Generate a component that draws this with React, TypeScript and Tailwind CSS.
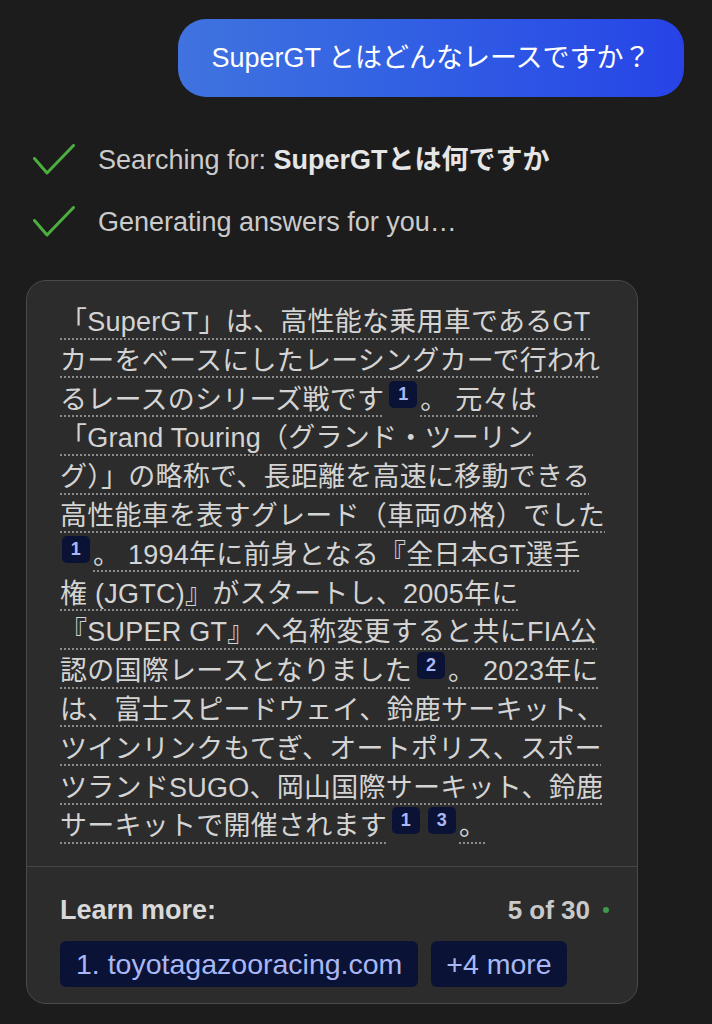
type Seg = string | number;

const LINES: Seg[][] = [
  ["「SuperGT」は、高性能な乗用車であるGT"],
  ["カーをベースにしたレーシングカーで行われ"],
  ["るレースのシリーズ戦です", 1, "。 元々は"],
  ["「Grand Touring（グランド・ツーリン"],
  ["グ）」の略称で、長距離を高速に移動できる"],
  ["高性能車を表すグレード（車両の格）でした"],
  [1, "。 1994年に前身となる『全日本GT選手"],
  ["権 (JGTC)』がスタートし、2005年に"],
  ["『SUPER GT』へ名称変更すると共にFIA公"],
  ["認の国際レースとなりました", 2, "。 2023年に"],
  ["は、富士スピードウェイ、鈴鹿サーキット、"],
  ["ツインリンクもてぎ、オートポリス、スポー"],
  ["ツランドSUGO、岡山国際サーキット、鈴鹿"],
  ["サーキットで開催されます", 1, 3, "。"],
];

const FONT = "font-['Liberation_Sans','Noto_Sans_CJK_JP',sans-serif]";

function Check() {
  return (
    <svg width="42" height="32" viewBox="0 0 42 32" fill="none" className="shrink-0">
      <path d="M1.5 14.5 L14 29 L40.5 1.5" stroke="#4cae3e" strokeWidth="3" strokeLinecap="round" strokeLinejoin="round" />
    </svg>
  );
}

function Cite({ n, first }: { n: number; first: boolean }) {
  return (
    <span
      className={`inline-block h-[27px] w-[28px] rounded-[5px] bg-[#0a1235] text-center align-top text-[18px] font-bold leading-[27px] text-[#a9b8f5] ${
        first ? "ml-[2px] mr-[3px]" : "ml-[5px] mr-[3px]"
      }`}
    >
      {n}
    </span>
  );
}

function AnswerLine({ segs }: { segs: Seg[] }) {
  return (
    <div className="whitespace-nowrap leading-[38.8px] tracking-[0.25px]">
      {segs.map((s, i) =>
        typeof s === "number" ? (
          <Cite key={i} n={s} first={i === 0} />
        ) : (
          <span
            key={i}
            className="underline decoration-[#8c8c8c] decoration-dotted decoration-2 underline-offset-[7px]"
          >
            {s}
          </span>
        )
      )}
    </div>
  );
}

export default function App() {
  return (
    <div className={`min-h-[1024px] w-[712px] bg-[#1c1c1c] pt-[19px] ${FONT}`}>
      <div className="flex justify-end pr-[28px]">
        <div className="flex h-[78px] w-[506px] items-center justify-center rounded-[28px] bg-linear-to-r from-[#4073df] to-[#2743e7] text-[27px] text-white">
          SuperGT とはどんなレースですか？
        </div>
      </div>

      <div className="mt-[43px] flex flex-col gap-[22px] pl-[33px]">
        <div className="flex h-[40px] items-center gap-[23px] text-[27px] text-[#cbcbcb]">
          <Check />
          <span>
            Searching for: <span className="font-bold text-[#e6e6e6]">SuperGTとは何ですか</span>
          </span>
        </div>
        <div className="flex h-[40px] items-center gap-[23px] text-[27px] text-[#cbcbcb]">
          <Check />
          <span>Generating answers for you…</span>
        </div>
      </div>

      <section className="ml-[26px] mt-[38px] w-[612px] rounded-[20px] border-[1.5px] border-[#4a4a4a] bg-[#2c2c2c]">
        <div className="px-[33px] pb-[20px] pt-[22px] text-[27px] text-[#d4d4d4]">
          {LINES.map((segs, i) => (
            <AnswerLine key={i} segs={segs} />
          ))}
        </div>

        <div className="border-t border-[#454545] px-[33px] pb-[16px] pt-[28px]">
          <div className="flex h-[30px] items-center justify-between">
            <span className="text-[27px] font-bold text-[#d9d9d9]">Learn more:</span>
            <span className="mr-[-5px] flex items-center gap-[13px] text-[26px] font-bold text-[#c9c9c9]">
              5 of 30
              <span className="h-[6px] w-[6px] rounded-full bg-[#3f9a4a]" />
            </span>
          </div>
          <div className="mt-[16px] flex gap-[13px]">
            <span className="flex h-[46px] items-center rounded-[6px] bg-[#0a1235] px-[16px] text-[28.5px] text-[#a9b8f5]">
              1. toyotagazooracing.com
            </span>
            <span className="flex h-[46px] items-center rounded-[6px] bg-[#0a1235] px-[15px] text-[28.5px] text-[#a9b8f5]">
              +4 more
            </span>
          </div>
        </div>
      </section>
    </div>
  );
}
